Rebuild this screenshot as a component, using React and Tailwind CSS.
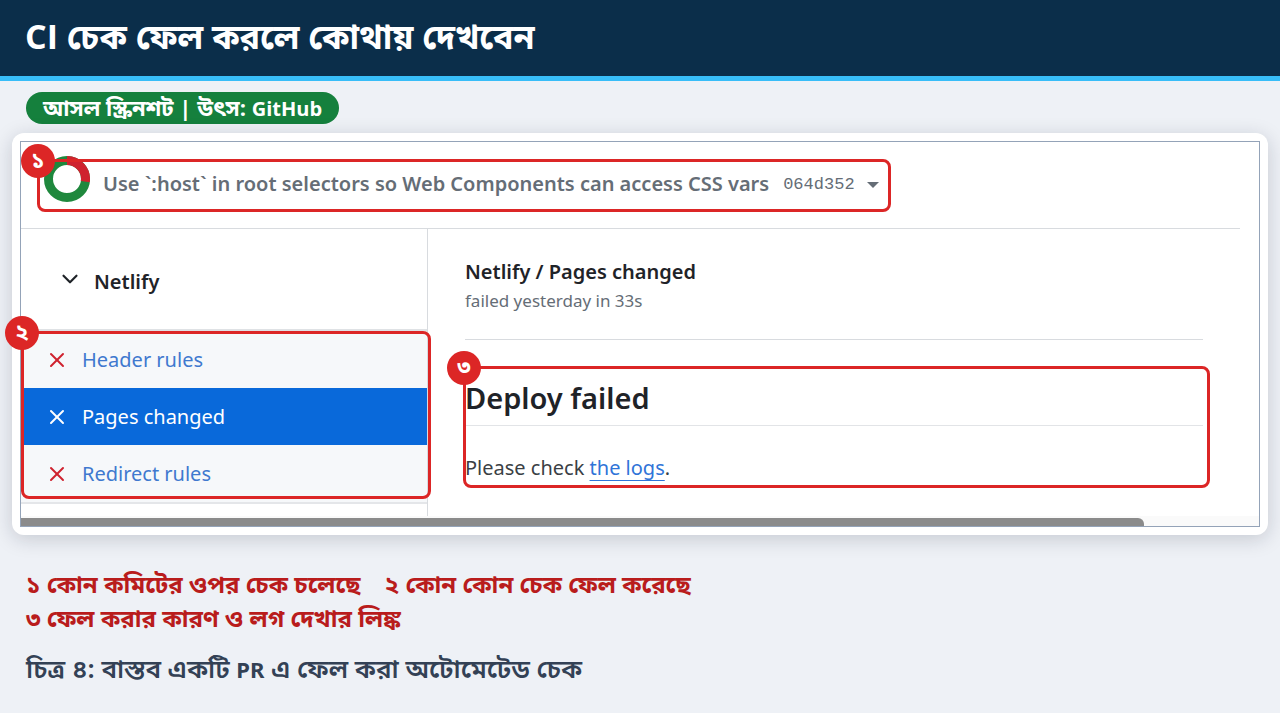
import { ChevronDown, X } from 'lucide-react'
import clsx from 'clsx'

const checks = [
  { name: 'Header rules', active: false },
  { name: 'Pages changed', active: true },
  { name: 'Redirect rules', active: false },
]

// red frame with a numbered badge on its top left corner
function Highlight({ number, className }) {
  return (
    <div className={clsx('absolute border-3 border-[#dc2626] rounded-lg pointer-events-none', className)}>
      <span className="absolute -top-[18px] -left-[19px] w-[34px] h-[34px] rounded-full bg-[#dc2626] text-white text-[22px] leading-[30px] font-bold text-center">
        {number}
      </span>
    </div>
  )
}

function StatusRing() {
  return (
    <svg className="mb-2.5" width="46" height="46" viewBox="0 0 46 46" fill="none" strokeWidth="9">
      <circle cx="23" cy="23" r="18.5" stroke="#1f883d" />
      <path d="M23 4.5a18.5 18.5 0 0 1 18.3 21.1" stroke="#cf222e" />
    </svg>
  )
}

export default function App() {
  return (
    <div className="min-h-screen bg-[#eef1f6] font-['Noto_Sans','Noto_Sans_Bengali',sans-serif]">
      <header className="h-[81px] bg-[#0b2e4a] border-b-5 border-[#38bdf8] px-[25px] pb-1 flex items-center">
        <h1 className="text-white text-[34px] leading-[48px] font-bold font-['Open_Sans','Noto_Sans_Bengali',sans-serif]">
          CI চেক ফেল করলে কোথায় দেখবেন
        </h1>
      </header>

      <main className="pt-[11px]">
        <p className="ml-[26px] h-8 w-fit px-[17px] rounded-full bg-[#15803d] text-white text-[22px] leading-[30px] font-bold font-['Open_Sans','Noto_Sans_Bengali',sans-serif]">
          আসল স্ক্রিনশট | উৎস: <span className="text-xl">GitHub</span>
        </p>

        <div className="mt-[9px] mx-3 p-2 bg-white rounded-xl shadow-[0_4px_20px_rgba(15,23,42,0.18)]">
          <div className="border border-[#94a3b8] text-[#1f2328]">
            <div className="relative h-[87px] mr-[19px] pl-[23px] pb-0.5 border-b border-[#d8dbdf] flex items-center">
              <StatusRing />
              <h2 className="ml-[13px] text-xl font-semibold text-[#656d76] whitespace-nowrap">
                Use `:host` in root selectors so Web Components can access CSS vars
              </h2>
              <button className="ml-3.5 pt-0.5 flex items-center gap-3 text-[#656d76]">
                <code className="font-['Liberation_Mono',monospace] text-[17px]">064d352</code>
                <svg width="12" height="6" viewBox="0 0 12 6" fill="currentColor">
                  <path d="M0 0h12L6 6z" />
                </svg>
              </button>
              <Highlight number="১" className="top-[17px] left-4 w-[854px] h-[53px]" />
            </div>

            <div className="flex">
              <aside className="w-[407px] shrink-0 h-[287px] border-r border-[#d8dbdf]">
                <button className="w-full h-[102px] pt-1.5 pl-9 border-b-2 border-[#dfe2e5] flex items-center gap-[11px] text-xl font-semibold">
                  <ChevronDown className="mb-1.5" size={26} strokeWidth={2} />
                  Netlify
                </button>
                <ul className="relative border-b-2 border-[#e4e6e9]">
                  {checks.map((c) => (
                    <li key={c.name}>
                      <a
                        href="#"
                        className={clsx(
                          'h-[57px] pl-6 flex items-center gap-[13px] text-xl',
                          c.active ? 'bg-[#0969da] text-white' : 'bg-[#f6f8fa] text-[#3f79cf]'
                        )}
                      >
                        <X size={24} strokeWidth={2} className={c.active ? 'text-white' : 'text-[#cf222e]'} />
                        {c.name}
                      </a>
                    </li>
                  ))}
                  <Highlight number="২" className="top-0 left-0 -right-1 h-[168px]" />
                </ul>
              </aside>

              <section className="flex-1 pl-[37px] pr-14">
                <div className="h-[111px] pt-7 border-b border-[#d8dbdf]">
                  <h3 className="text-xl leading-[30px] font-semibold">Netlify / Pages changed</h3>
                  <p className="text-[17px] leading-7 text-[#656d76]">failed yesterday in 33s</p>
                </div>
                <div className="relative">
                  <h4 className="h-[86px] pt-9 text-[29px] leading-[44px] font-semibold border-b border-[#e2e4e7]">Deploy failed</h4>
                  <p className="pt-[27px] text-xl leading-[30px] text-[#3a3f45]">
                    Please check{' '}
                    <a href="#" className="text-[#2f74d8] underline decoration-1 underline-offset-5">the logs</a>.
                  </p>
                  <Highlight number="৩" className="top-[26px] -left-0.5 -right-[7px] h-[122px]" />
                </div>
              </section>
            </div>

            <div className="h-[10px] pt-0.5 bg-[#fafafa]">
              <div className="h-2 mr-[115px] bg-[#8b8b8b] rounded-tr-md" />
            </div>
          </div>
        </div>

        <div className="mt-8 px-[26px] text-2xl leading-[34px] font-bold text-[#b91c1c]">
          <p className="flex gap-6">
            <span>১ কোন কমিটের ওপর চেক চলেছে</span>
            <span>২ কোন কোন চেক ফেল করেছে</span>
          </p>
          <p>৩ ফেল করার কারণ ও লগ দেখার লিঙ্ক</p>
        </div>
        <p className="mt-4 px-[26px] text-[26px] leading-[34px] font-semibold text-[#334155]">
          চিত্র ৪: বাস্তব একটি <span className="text-[22px] font-bold">PR</span> এ ফেল করা অটোমেটেড চেক
        </p>
      </main>
    </div>
  )
}
